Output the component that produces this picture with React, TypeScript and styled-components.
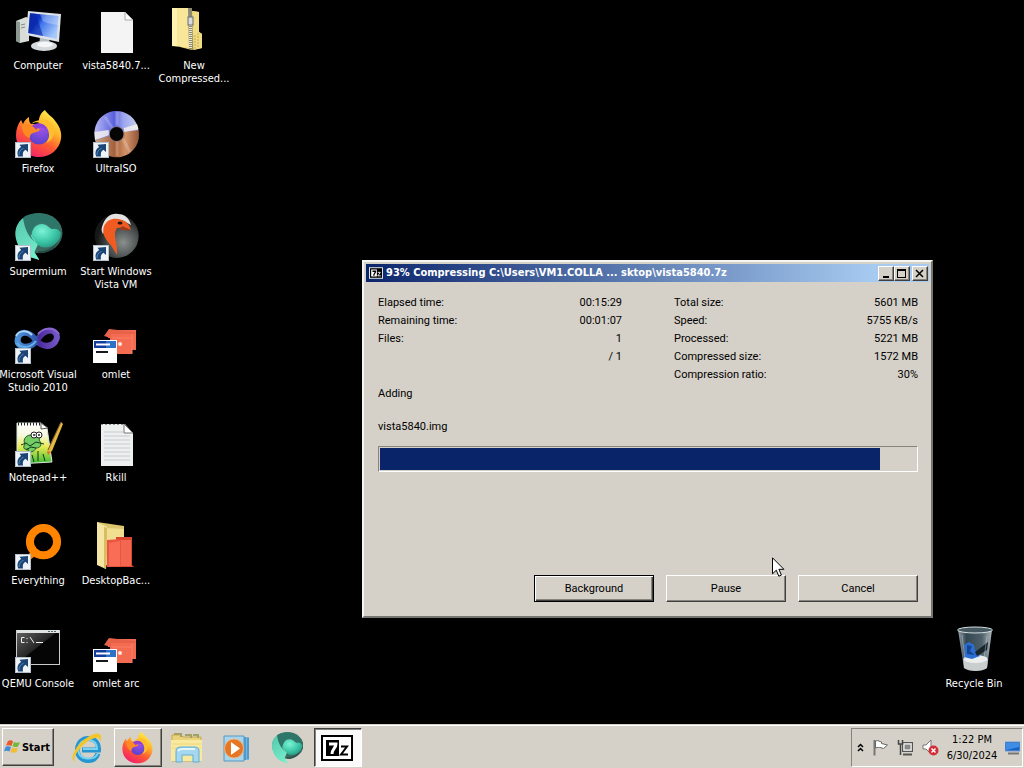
import React from 'react';
import styled, { createGlobalStyle, css } from 'styled-components';

const GlobalStyle = createGlobalStyle`
  * { box-sizing: border-box; }
  body { margin: 0; background: #000; }
  button { font: inherit; color: inherit; }
`;

const face = '#d5d1c8';
const uiFont = '"DejaVu Sans Condensed", Tahoma, "DejaVu Sans", sans-serif';
const dialogFont = 'Roboto, "Liberation Sans", Arial, sans-serif';

const raised = css`
  border: 1px solid;
  border-color: #fff #404040 #404040 #fff;
  box-shadow: inset -1px -1px 0 #87847e;
`;

const Screen = styled.div`
  min-height: 100vh;
  display: flex;
  flex-direction: column;
  background: #000;
  font: 11px/13px ${uiFont};
`;

const Desktop = styled.main`
  flex: 1;
  position: relative;
  display: flex;
  justify-content: space-between;
  padding-right: 12px;
`;

const IconGrid = styled.div`
  display: grid;
  grid-auto-flow: column;
  grid-template-rows: repeat(7, 103px);
  grid-auto-columns: 76px;
  column-gap: 2px;
`;

const BinColumn = styled.div`
  display: grid;
  grid-template-rows: repeat(7, 103px);
  grid-auto-columns: 76px;
  & > * { grid-row: 7; }
`;

const Shortcut = styled.button`
  display: flex;
  flex-direction: column;
  align-items: center;
  justify-content: flex-start;
  gap: 4px;
  padding: 7px 0 0;
  border: 0;
  background: none;
  color: #fff;
`;

const Picture = styled.span`
  position: relative;
  display: block;
  width: 48px;
  height: 48px;
  & > svg { display: block; overflow: visible; }
`;

const Badge = styled.svg`
  position: absolute;
  left: 1px;
  bottom: 0;
`;

const Label = styled.span`
  display: flex;
  flex-direction: column;
  align-items: center;
  white-space: nowrap;
`;

const Dialog = styled.section`
  position: absolute;
  left: 362px;
  top: 260px;
  width: 571px;
  min-height: 358px;
  display: flex;
  flex-direction: column;
  padding: 2px;
  border: 2px solid;
  border-color: #f6f5f2 #77756f #77756f #f6f5f2;
  background: ${face};
  font: 11px/18px ${dialogFont};
  color: #000;
`;

const TitleBar = styled.header`
  display: flex;
  align-items: center;
  height: 18px;
  padding: 0 1px 0 3px;
  gap: 3px;
  background: linear-gradient(90deg, #0b256b, #a6caf0 90%);
  color: #fff;
`;

const Title = styled.h1`
  flex: 1;
  margin: 0;
  font: bold 11px/18px ${uiFont};
  white-space: nowrap;
`;

const CaptionButtons = styled.div`
  display: flex;
  & > :last-child { margin-left: 2px; }
`;

const CaptionButton = styled.button`
  ${raised}
  display: grid;
  place-items: center;
  width: 16px;
  height: 15px;
  padding: 0;
  background: ${face};
`;

const DialogBody = styled.div`
  flex: 1;
  display: flex;
  flex-direction: column;
  padding: 12px 11px 12px 12px;
`;

const Stats = styled.div`
  display: grid;
  grid-template-columns: 1fr 1fr;
  column-gap: 52px;
`;

const StatList = styled.dl`
  margin: 0;
`;

const Stat = styled.div`
  display: flex;
  justify-content: space-between;
  min-height: 18px;
  & > dd { margin: 0; }
`;

const StatusLine = styled.p`
  margin: 0 0 13px;
  line-height: 20px;
`;

const FileName = styled.p`
  margin: 0 0 9px;
  line-height: 20px;
`;

const Track = styled.div`
  height: 26px;
  padding: 1px;
  border: 1px solid;
  border-color: #87847e #fff #fff #87847e;
`;

const Fill = styled.div`
  height: 100%;
  background: #0a246a;
`;

const Actions = styled.div`
  display: flex;
  justify-content: flex-end;
  gap: 12px;
  margin-top: auto;
`;

const ActionButton = styled.button<{ $primary?: boolean }>`
  ${raised}
  width: 120px;
  height: 27px;
  padding: 0;
  background: ${face};
  ${p => p.$primary && css`
    border-color: #000;
    box-shadow: inset 1px 1px 0 #fff, inset -1px -1px 0 #404040, inset -2px -2px 0 #87847e;
  `}
`;

const Pointer = styled.svg`
  position: absolute;
  left: 772px;
  top: 557px;
`;

const Taskbar = styled.footer`
  display: flex;
  align-items: stretch;
  height: 44px;
  padding: 2px 1px 1px 2px;
  border-top: 1px solid ${face};
  box-shadow: inset 0 1px 0 #fff;
  background: ${face};
  color: #000;
`;

const StartButton = styled.button`
  ${raised}
  display: flex;
  align-items: center;
  justify-content: center;
  width: 52px;
  margin: 1px 10px 1px 0;
  padding: 0 2px 0 0;
  background: ${face};
  font-weight: bold;
`;

const TaskList = styled.nav`
  flex: 1;
  display: flex;
  gap: 2px;
  padding-top: 1px;
`;

const TaskButton = styled.button<{ $state?: 'open' | 'active' }>`
  display: grid;
  place-items: center;
  width: 48px;
  padding: 0 2px 0 0;
  border: 1px solid transparent;
  background: none;
  ${p => p.$state === 'open' && raised}
  ${p => p.$state === 'active' && css`
    border-color: #404040 #fff #fff #404040;
    box-shadow: inset 1px 1px 0 #87847e;
    background: #fbfafa;
  `}
`;

const Tray = styled.aside`
  display: flex;
  align-items: center;
  gap: 8px;
  margin-top: 1px;
  padding: 0 2px 0 5px;
  border: 1px solid;
  border-color: #87847e #fff #fff #87847e;
`;

const Clock = styled.time`
  display: flex;
  flex-direction: column;
  align-items: center;
  width: 50px;
  line-height: 16px;
  white-space: nowrap;
`;

const TrayButton = styled.button`
  display: grid;
  place-items: center;
  padding: 0;
  border: 0;
  background: none;
`;

type ArtProps = { size?: number };

const Art = ({ size = 48, children }: ArtProps & { children: React.ReactNode }) => (
  <svg width={size} height={size} viewBox="0 0 48 48" aria-hidden="true">{children}</svg>
);

const ShortcutBadge = () => (
  <Badge width="16" height="16" viewBox="0 0 16 16" aria-hidden="true">
    <rect x=".5" y=".5" width="15" height="15" fill="#eef3f7" stroke="#b5c0ca" />
    <path d="M3.200 14.500c-1.500-4-.5-7.500 3-9.500L4.500 2.800 13 2v8l-2.500-2.200C7.800 9.500 7.500 11.500 8 14.500z" fill="#1c4474" />
    <path d="M4 13c-.2-3 1.500-5.600 4.500-6.700" stroke="#4d86bb" fill="none" />
  </Badge>
);

const ComputerArt = () => (
  <Art>
    <defs>
      <linearGradient id="screen" x1="0" y1="0" x2="1" y2=".6">
        <stop offset="0" stopColor="#0a2fb4" /><stop offset=".35" stopColor="#0b35c4" /><stop offset=".5" stopColor="#3f74ec" /><stop offset="1" stopColor="#a5c9fb" />
      </linearGradient>
    </defs>
    <path d="M2 14 12 10l3 1v23l-9 2-4-2z" fill="#d9ddd7" />
    <path d="M2 14l4 1v21l-4-2z" fill="#8d9791" />
    <path d="M7 18l4-1M7 21l4-1" stroke="#7d8785" />
    <path d="M26 30h9l1 9H25z" fill="#b5bbc0" />
    <ellipse cx="30" cy="39" rx="13" ry="5" fill="#d5dadd" />
    <ellipse cx="31" cy="37.500" rx="8" ry="2.800" fill="#f5f6f7" />
    <path d="M14 4 47 7l-2 28-33-7z" fill="#dde2e8" />
    <path d="M16 6.200 44.500 9l-1.800 22.800L14.300 26z" fill="url(#screen)" />
    <path d="M16 6.200 22 6.800 29 29 14.300 26z" fill="#0b24a0" opacity=".6" />
    <path d="M26 7.200 44.500 9l-.6 9c-6-1-12-2-15-4z" fill="#fff" opacity=".28" />
  </Art>
);

const FileArt = () => (
  <Art>
    <path d="M9 5h24l8 8v33H9z" fill="#f4f4f4" />
    <path d="M33 5v8h8z" fill="#fff" stroke="#aaa" />
  </Art>
);

const ZipArt = () => (
  <Art>
    <path d="M10 2 29 5v20l3 2v14l-10 2-12-3z" fill="#e8cf6c" />
    <path d="M2 1h16l3 2v38L2 39z" fill="#f8e798" />
    <path d="M2 1h5v38H2z" fill="#fff3b3" />
    <path d="M22 4l7 1v20l3 2v14l-8 2z" fill="#f0dd83" />
    <path d="M18 1h4l1 42-4-1z" fill="#8d8973" />
    <path d="M20.500 12v30" stroke="#ece8d4" strokeWidth="3" strokeDasharray="1 1" />
    <rect x="18" y="10" width="5" height="8" fill="#d8dadf" stroke="#666b73" />
    <path d="M28 26v15M25 28v14" stroke="#c4a94d" strokeDasharray="2 1" />
  </Art>
);

const FirefoxArt = ({ size }: ArtProps) => (
  <Art size={size}>
    <defs>
      <linearGradient id="fox" x1=".8" y1="0" x2=".25" y2="1">
        <stop offset="0" stopColor="#fff44f" /><stop offset=".35" stopColor="#ffb52b" /><stop offset=".62" stopColor="#ff5b32" /><stop offset="1" stopColor="#f01a70" />
      </linearGradient>
      <radialGradient id="globe" cx=".6" cy=".2" r=".9">
        <stop offset="0" stopColor="#a552e8" /><stop offset="1" stopColor="#5040c9" />
      </radialGradient>
    </defs>
    <path d="M31 0c2 4 8 7 11 12 4 5 6 11 5 17-2 11-11 18-22 18C12 47 2 38 2 25c0-6 2-11 5-15 1 1 1 3 2 4 1-3 3-5 6-7 0 3 0 5 2 7 3 0 6 0 8 1-1-6 1-12 6-15z" fill="url(#fox)" />
    <circle cx="25" cy="24" r="10.500" fill="url(#globe)" />
    <path d="M8 16c4-3 9-2 12 1 3 0 5 1 6 3-2 2-5 2-7 3-3 1-3 3-3 5-5-1-8-6-8-12z" fill="#ff8a24" />
    <path d="M17 14c6-4 15-1 17 6 2 5 1 10-2 13 6-2 9-8 8-14-1-6-7-11-12-9-4 0-8 1-11 4z" fill="#ffbe2e" />
    <path d="M18 16c5-5 13-3 14 3-3-2-8-2-10 1-1-2-2-3-4-4z" fill="#8f40d6" />
  </Art>
);

const DiscArt = () => (
  <Art>
    <defs>
      <linearGradient id="discTop" x1="0" y1="0" x2="1" y2="0">
        <stop offset="0" stopColor="#b7b9f5" /><stop offset=".45" stopColor="#5960dc" /><stop offset=".65" stopColor="#9ba4f0" /><stop offset="1" stopColor="#c9d0ee" />
      </linearGradient>
      <linearGradient id="discBottom" x1="0" y1="0" x2="1" y2="0">
        <stop offset="0" stopColor="#c5a48b" /><stop offset=".45" stopColor="#a55f38" /><stop offset=".7" stopColor="#d39369" /><stop offset="1" stopColor="#905438" />
      </linearGradient>
    </defs>
    <path d="M2.500 25a22 22 0 0 1 44-4L32 23l-14 4-15 3z" fill="url(#discTop)" />
    <path d="M3 30l14-4 15-4 14.500-2A22 22 0 0 1 3 30z" fill="url(#discBottom)" />
    <path d="M2.500 22l14-2 1 5-14.500 5zM32 18l13-4 1.500 5L32 22z" fill="#f2f0ef" opacity=".85" />
    <path d="M13 7l8 12M25 2v13M25 31v15M31 29l7 13" stroke="#fff" strokeWidth="3" opacity=".2" />
    <circle cx="24.600" cy="24" r="8" fill="#85757a" opacity=".6" />
    <circle cx="24.600" cy="24" r="6.900" fill="#050505" />
  </Art>
);

const SupermiumArt = ({ size }: ArtProps) => (
  <Art size={size}>
    <defs>
      <linearGradient id="leaf" x1=".2" y1="0" x2=".6" y2="1">
        <stop offset="0" stopColor="#58c9ad" /><stop offset="1" stopColor="#74edcb" />
      </linearGradient>
      <radialGradient id="bulb" cx=".35" cy=".3" r=".9">
        <stop offset="0" stopColor="#7df2d6" /><stop offset=".5" stopColor="#3ec8a8" /><stop offset="1" stopColor="#1a8471" />
      </radialGradient>
      <linearGradient id="rim" x1="0" y1="0" x2="1" y2="1">
        <stop offset="0" stopColor="#3d8a7b" /><stop offset="1" stopColor="#3b5b55" />
      </linearGradient>
    </defs>
    <ellipse cx="25" cy="20" rx="23.500" ry="20" fill="url(#rim)" />
    <path d="M9 5C3 10 1 16 1.500 23c1 9 7 18 14 21l10 3-5-8 4-9c-6-5-10-12-15-25z" fill="url(#leaf)" />
    <path d="M18 23c-1-7 4-12 10-12 5 0 7 4 10 5 4-1 7 0 9 4-1 11-10 16-20 14-4-2-6-6-9-11z" fill="url(#bulb)" />
    <path d="M9 5c5-5 22-7 31 1 4 3 7 8 7 13-2-4-5-5-9-3-5-9-16-9-20 2-3 4 0 8 4 12-7-6-11-12-13-25z" fill="#2e7669" />
    <path d="M24 38c8 1 15-3 20-10-3 8-11 13-20 12z" fill="#234c46" />
  </Art>
);

const QemuArt = () => (
  <Art>
    <defs>
      <radialGradient id="orb" cx=".65" cy=".65" r=".6">
        <stop offset="0" stopColor="#8b908f" /><stop offset=".55" stopColor="#4c5151" /><stop offset="1" stopColor="#161717" />
      </radialGradient>
    </defs>
    <circle cx="24.700" cy="23" r="22" fill="url(#orb)" />
    <path d="M10 14C13 4 19 0 26 1c7 0 11 4 13 11l-9-5-10 1-9 13c-1-2-2-4-1-7z" fill="#e4e2e0" />
    <path d="M12 13C15 6 23 4 30 7c5 2 7 4 9 10-5-3-10-3-14-2-3 4-2 9-1 14 1 4 1 8 1 13-3-5-5-9-9-13-4-5-6-10-4-16z" fill="#f15b22" />
    <path d="M30 13l9 4c-4 1-8 0-11 0z" fill="#a03a18" />
    <ellipse cx="28" cy="10" rx="2.500" ry="1.500" fill="#241512" />
  </Art>
);

const VisualStudioArt = () => (
  <Art>
    <defs>
      <linearGradient id="vs">
        <stop offset="0" stopColor="#4d93da" /><stop offset=".48" stopColor="#3056ac" /><stop offset=".55" stopColor="#4c2b9c" /><stop offset="1" stopColor="#7256c6" />
      </linearGradient>
    </defs>
    <path d="M4 22c2-7 11-7 17 1s15 9 20 3c5-7-1-13-8-11-8 2-9 12-17 15C8 32 2 29 4 22z" fill="none" stroke="url(#vs)" strokeWidth="6" />
    <path d="M2 20c3-6 11-6 16-1" stroke="#add7f5" strokeWidth="2" fill="none" />
    <path d="M24 18c6-7 16-7 21 0" stroke="#8a66cf" strokeWidth="2" fill="none" />
    <path d="M3 27c4 6 14 5 19-2" stroke="#65b1e8" strokeWidth="2" fill="none" />
  </Art>
);

const OmletArt = () => (
  <Art>
    <path d="M16 14h28v20h-4v4H18V22h-2z" fill="#f36b51" />
    <path d="M30 17h10v21M20 22h20" stroke="#f98068" fill="none" />
    <path d="M12 20l5-7 26 3v2H19v4z" fill="#e8624a" />
    <circle cx="28" cy="28" r="2" fill="#fde6db" />
    <rect x="1" y="24" width="24" height="23" fill="#fff" />
    <path d="M2 25h22v7H2z" fill="#123d9b" /><path d="M14 25h10v7H14z" fill="#2e72c8" />
    <path d="M4 28.500h14" stroke="#fff" strokeWidth="2" />
    <path d="M4 36h12" stroke="#17191e" strokeWidth="2" />
  </Art>
);

const NotepadPlusArt = () => (
  <Art>
    <defs>
      <linearGradient id="note" x1="0" y1="0" x2="0" y2="1">
        <stop offset="0" stopColor="#fff" /><stop offset=".3" stopColor="#f7f8df" /><stop offset=".58" stopColor="#e7eb53" /><stop offset="1" stopColor="#36bb35" />
      </linearGradient>
    </defs>
    <path d="M3 4h24l6 5 5 34-35 2z" fill="url(#note)" stroke="#dce5db" />
    <path d="M4 5h23" stroke="#222" strokeWidth="3" strokeDasharray="1 2" />
    <path d="M27 4v6l7-1z" fill="#fff" stroke="#555" />
    <path d="M11 25c-3-5 2-10 8-9 4-4 9 0 6 5 4 5 1 8-3 8-2 5-9 5-8 1-5 1-5-2-3-5z" fill="#73cd64" stroke="#245a31" />
    <circle cx="20" cy="16" r="3" fill="#fff" stroke="#222" /><circle cx="25" cy="16" r="3" fill="#fff" stroke="#222" />
    <path d="M7 26l5-2 4 3 6-4 8 2M12 31l5-3 5 1M18 36l2 7M24 32v10M29 35l2 7" stroke="#14351b" fill="none" />
    <path d="M47 3 33 32l1 3 4-3L49 5z" fill="#e5b93d" /><path d="M47 3 34 31" stroke="#7b572d" /><path d="M33 32l1 4 3-3z" fill="#de741c" />
    <circle cx="20" cy="16" r="1" fill="#222" /><circle cx="25" cy="16" r="1" fill="#222" />
  </Art>
);

const TextFileArt = () => (
  <Art>
    <path d="M9 5h24l8 9v33H9z" fill="#eeefef" />
    <path d="M12 13h19M12 17h26M12 21h26M12 25h26M12 29h26M12 33h26M12 37h26M12 41h26" stroke="#c6ccd0" />
    <path d="M9 5.500h24" stroke="#8c9196" strokeDasharray="2 2" />
    <path d="M32 5v9h9z" fill="#fff" stroke="#777" />
  </Art>
);

const EverythingArt = () => (
  <Art>
    <circle cx="29.500" cy="19.700" r="13.600" fill="none" stroke="#ff8500" strokeWidth="8" />
    <path d="M18 29l4 4-7 6-4-4z" fill="#ff8500" />
  </Art>
);

const FolderArt = () => (
  <Art>
    <path d="M5 0 32 4v14L13 44z" fill="#dcc56d" />
    <path d="M14 6l18 1v36H14z" fill="#f1de91" />
    <path d="M24 15h16v28l2 2H24z" fill="#d94731" />
    <path d="M27 18h12v26H27z" fill="#f36650" />
    <path d="M15 18l14-1v28H15z" fill="#e95541" />
    <path d="M17 21l11-2v25H17z" fill="#f96c55" />
    <path d="M5 0l10 5v25l-1 17L5 43z" fill="#f5e6a3" /><path d="M12 5l3 1v24l-1 17-2-1z" fill="#d8bd64" />
  </Art>
);

const ConsoleArt = () => (
  <Art>
    <defs>
      <linearGradient id="glass" x1="0" y1="0" x2="1" y2="1">
        <stop offset="0" stopColor="#666" /><stop offset=".48" stopColor="#252525" /><stop offset=".5" stopColor="#050505" />
      </linearGradient>
    </defs>
    <rect x="2.500" y="5.500" width="43" height="34" fill="url(#glass)" stroke="#c8cccd" />
    <path d="M3 6.500h42" stroke="#e0e3e4" strokeWidth="3" />
    <path d="M34 6.500h9" stroke="#566" strokeDasharray="2 1" />
    <path d="M10.500 12.500h-3v5h3M13 13v1M13 17v1M16 12l4 6M22 17.500h7" stroke="#f0f0f0" fill="none" />
  </Art>
);

const BinArt = () => (
  <Art>
    <defs>
      <linearGradient id="bin"><stop offset="0" stopColor="#919da5" /><stop offset=".25" stopColor="#344852" /><stop offset=".7" stopColor="#4f606a" /><stop offset="1" stopColor="#aeb7bd" /></linearGradient>
    </defs>
    <path d="M8 5h34l-5 38c-5 4-18 4-23 0z" fill="url(#bin)" />
    <path d="M13 34c7 4 17 4 25 0l-1 9c-5 4-18 4-23 0z" fill="#c9cdce" />
    <ellipse cx="25.500" cy="34" rx="12" ry="4" fill="#eceeee" />
    <path d="M14 20l5-3 5 3 1 5 5 6-8 3-8-2 1-6z" fill="#2b6fd3" /><path d="M17 20l5 1-2 5 5 4-8-1z" fill="#174591" />
    <path d="M25 27l13-10-1 8-10 6z" fill="#17242b" />
    <ellipse cx="25" cy="5" rx="17.500" ry="3" fill="#465961" stroke="#d7dfe2" />
    <path d="M12 10l4 31M37 11l-4 30" stroke="#d4dce0" opacity=".4" />
  </Art>
);

const SevenZip = ({ width, height, invert }: { width: number; height: number; invert?: boolean }) => (
  <svg width={width} height={height} viewBox="0 0 32 26" aria-hidden="true">
    <rect x="1" y="1" width="30" height="24" fill={invert ? '#000' : '#fff'} stroke={invert ? '#fff' : '#000'} strokeWidth="2" />
    <rect x="5" y="5" width="13" height="16" fill={invert ? '#fff' : '#000'} />
    <path d="M8 9h7c0 4-4 5-4 10" fill="none" stroke={invert ? '#000' : '#fff'} strokeWidth="3" />
    <path d="M20 11.500h6l-6 8h7" fill="none" stroke={invert ? '#fff' : '#000'} strokeWidth="2" />
  </svg>
);

const WindowsFlag = () => (
  <svg width="18" height="16" viewBox="0 0 18 16" aria-hidden="true">
    <path d="M4 2c2-1 4-1 5 .5L7.500 7C6 6 4 6 2 6.500z" fill="#e85a2b" />
    <path d="M10 3c2 1 4 1 6 0l-2 4.500c-2 .8-4 .7-5.500-.2z" fill="#72b83e" />
    <path d="M1.700 7.700C4 7 5.500 7.200 7 8l-1.500 4.600C4 11.500 2 11.500 0 12.200z" fill="#438cdb" />
    <path d="M8 8.500c2 1 4 1.200 6 .3L12.500 13c-2 1-4.200.8-6 0z" fill="#f2bd32" />
  </svg>
);

const IeArt = () => (
  <svg width="32" height="32" viewBox="0 0 32 32" aria-hidden="true">
    <path d="M27 21.500C25 27 20.500 29 16 28.500 9.500 28 6 23 6.500 17 7 10.500 11.500 6 18 6.500c6.500.5 10 5 9.500 11.500H11" fill="none" stroke="#2596cf" strokeWidth="5" />
    <path d="M27 21C25 26 20.500 27 16 26.500 9.500 26 7 22 7.500 17 8 10.500 12 8 18 8c5 .5 8 4 8 9H12" fill="none" stroke="#7bd3f2" strokeWidth="2" />
    <path d="M4 30C-3 27 6 11 17 5 23 1 29 0 30 4c.5 2 0 4-1 6 0-3-1-5-5-4C14 8 0 25 4 30z" fill="#f2c52d" />
  </svg>
);

const ExplorerArt = () => (
  <svg width="34" height="34" viewBox="0 0 34 34" aria-hidden="true">
    <path d="M2 4h9l2 2h18v24H2z" fill="#ead27a" stroke="#c9aa4e" />
    <path d="M4 3h7v3M15 4h6v3M23 4h5v3" fill="none" stroke="#a3a068" strokeWidth="2" />
    <path d="M1 9h31v21H1z" fill="#f8e9a0" /><path d="M2 13h29M2 17h29" stroke="#f0d878" />
    <path d="M6 31V20c0-3 2-4 5-4h13c3 0 5 1 5 4v11h-6v-7H12v7z" fill="#a5d7ef" stroke="#5daed8" />
    <path d="M8 20c1-2 3-2 5-2h12" stroke="#e4f6fb" strokeWidth="2" fill="none" />
  </svg>
);

const PlayerArt = () => (
  <svg width="32" height="32" viewBox="0 0 32 32" aria-hidden="true">
    <path d="M9 5h19v23H9z" fill="#75b7df" /><path d="M24 5v23M27 6v21" stroke="#327fba" />
    <path d="M3 4h20v25H3z" fill="#a9d5eb" stroke="#5597c5" />
    <circle cx="13" cy="16.500" r="9.500" fill="#e67623" stroke="#f3b37d" />
    <path d="M10 10l9 6.500-9 6.500z" fill="#fff" />
  </svg>
);

type Item = { lines: string[]; art: React.ReactNode; link?: boolean };

const items: Item[] = [
  { lines: ['Computer'], art: <ComputerArt /> },
  { lines: ['Firefox'], art: <FirefoxArt />, link: true },
  { lines: ['Supermium'], art: <SupermiumArt />, link: true },
  { lines: ['Microsoft Visual', 'Studio 2010'], art: <VisualStudioArt />, link: true },
  { lines: ['Notepad++'], art: <NotepadPlusArt />, link: true },
  { lines: ['Everything'], art: <EverythingArt />, link: true },
  { lines: ['QEMU Console'], art: <ConsoleArt />, link: true },
  { lines: ['vista5840.7...'], art: <FileArt /> },
  { lines: ['UltraISO'], art: <DiscArt />, link: true },
  { lines: ['Start Windows', 'Vista VM'], art: <QemuArt />, link: true },
  { lines: ['omlet'], art: <OmletArt /> },
  { lines: ['Rkill'], art: <TextFileArt /> },
  { lines: ['DesktopBac...'], art: <FolderArt /> },
  { lines: ['omlet arc'], art: <OmletArt /> },
  { lines: ['New', 'Compressed...'], art: <ZipArt /> },
];

const DesktopItem = ({ lines, art, link }: Item) => (
  <Shortcut type="button">
    <Picture>{art}{link && <ShortcutBadge />}</Picture>
    <Label>{lines.map(line => <span key={line}>{line}</span>)}</Label>
  </Shortcut>
);

const totalMb = 5601;
const processedMb = 5221;

const timeStats = [['Elapsed time:', '00:15:29'], ['Remaining time:', '00:01:07'], ['Files:', '1'], ['', '/ 1']];
const sizeStats = [['Total size:', `${totalMb} MB`], ['Speed:', '5755 KB/s'], ['Processed:', `${processedMb} MB`], ['Compressed size:', '1572 MB'], ['Compression ratio:', '30%']];

const StatGroup = ({ rows }: { rows: string[][] }) => (
  <StatList>
    {rows.map(([name, value]) => <Stat key={name}><dt>{name}</dt><dd>{value}</dd></Stat>)}
  </StatList>
);

export default function App() {
  const percent = (processedMb / totalMb) * 100;
  return (
    <Screen>
      <GlobalStyle />
      <Desktop>
        <IconGrid>{items.map(item => <DesktopItem key={item.lines[0]} {...item} />)}</IconGrid>
        <BinColumn><DesktopItem lines={['Recycle Bin']} art={<BinArt />} /></BinColumn>

        <Dialog aria-labelledby="dialog-title">
          <TitleBar>
            <SevenZip width={14} height={12} invert />
            <Title id="dialog-title">93% Compressing C:\Users\VM1.COLLA ... sktop\vista5840.7z</Title>
            <CaptionButtons>
              <CaptionButton type="button" aria-label="Minimize">
                <svg width="10" height="9" viewBox="0 0 10 9"><path d="M2 7h6v2H2z" /></svg>
              </CaptionButton>
              <CaptionButton type="button" aria-label="Maximize">
                <svg width="10" height="9" viewBox="0 0 10 9"><path d="M0 0h9v9H0zM1 2v6h7V2z" fillRule="evenodd" /></svg>
              </CaptionButton>
              <CaptionButton type="button" aria-label="Close">
                <svg width="10" height="9" viewBox="0 0 10 9"><path d="M1 1l7 7M8 1l-7 7" stroke="#000" strokeWidth="1.500" /></svg>
              </CaptionButton>
            </CaptionButtons>
          </TitleBar>
          <DialogBody>
            <Stats>
              <StatGroup rows={timeStats} />
              <StatGroup rows={sizeStats} />
            </Stats>
            <StatusLine>Adding</StatusLine>
            <FileName>vista5840.img</FileName>
            <Track role="progressbar" aria-label="Compression progress" aria-valuenow={Math.round(percent)} aria-valuemin={0} aria-valuemax={100}>
              <Fill style={{ width: `${percent}%` }} />
            </Track>
            <Actions>
              <ActionButton type="button" $primary>Background</ActionButton>
              <ActionButton type="button">Pause</ActionButton>
              <ActionButton type="button">Cancel</ActionButton>
            </Actions>
          </DialogBody>
        </Dialog>
        <Pointer width="13" height="21" viewBox="0 0 13 21" aria-hidden="true">
          <path d="M.5.800v16l3.800-3.600 2.500 6 2.600-1.100-2.500-5.800h5z" fill="#fff" stroke="#000" />
        </Pointer>
      </Desktop>

      <Taskbar>
        <StartButton type="button"><WindowsFlag />Start</StartButton>
        <TaskList aria-label="Tasks">
          <TaskButton type="button" aria-label="Internet Explorer"><IeArt /></TaskButton>
          <TaskButton type="button" aria-label="Firefox" $state="open"><FirefoxArt size={32} /></TaskButton>
          <TaskButton type="button" aria-label="Explorer"><ExplorerArt /></TaskButton>
          <TaskButton type="button" aria-label="Media Player"><PlayerArt /></TaskButton>
          <TaskButton type="button" aria-label="Supermium"><SupermiumArt size={32} /></TaskButton>
          <TaskButton type="button" aria-label="7-Zip" $state="active"><SevenZip width={32} height={26} /></TaskButton>
        </TaskList>
        <Tray>
          <TrayButton type="button" aria-label="Show hidden icons">
            <svg width="7" height="9" viewBox="0 0 7 9"><path d="M1 4l2.500-2.500L6 4M1 8l2.500-2.500L6 8" fill="none" stroke="#000" strokeWidth="1.500" /></svg>
          </TrayButton>
          <TrayButton type="button" aria-label="Action Center">
            <svg width="17" height="17" viewBox="0 0 17 17"><path d="M2.500 1v15.500" stroke="#777" strokeWidth="2" /><path d="M3.500 2c3-1 4 .5 6 1v1.500l6 1.500-4 3.500-2.500-.8C7 8.500 6 8 3.500 9z" fill="#fff" stroke="#666" /></svg>
          </TrayButton>
          <TrayButton type="button" aria-label="Network">
            <svg width="17" height="17" viewBox="0 0 17 17"><rect x="5.500" y="3.500" width="10" height="9" fill="#aaa" stroke="#555" /><rect x="7" y="5" width="7" height="6" fill="#888" stroke="#fff" /><path d="M6 15.500h9" stroke="#555" strokeWidth="2" /><path d="M1.500 1v4h4V1M3.500 5v11" stroke="#444" strokeWidth="1.500" fill="none" /></svg>
          </TrayButton>
          <TrayButton type="button" aria-label="Volume muted">
            <svg width="17" height="17" viewBox="0 0 17 17"><path d="M1 6h3l5-5v14l-5-5H1z" fill="#fff" stroke="#777" /><circle cx="11.500" cy="11.500" r="5" fill="#d32d35" /><path d="M9.500 9.500l4 4M13.500 9.500l-4 4" stroke="#fff" strokeWidth="1.500" /></svg>
          </TrayButton>
          <Clock dateTime="2024-06-30T13:22"><span>1:22 PM</span><span>6/30/2024</span></Clock>
          <TrayButton type="button" aria-label="Show desktop">
            <svg width="15" height="14" viewBox="0 0 15 14"><path d="M0 1h15v9H0z" fill="#1763c4" stroke="#6f9bd2" /><path d="M1 2h13v4L1 9z" fill="#3e8de5" /><path d="M3 12.500h11" stroke="#777" strokeWidth="2" /></svg>
          </TrayButton>
        </Tray>
      </Taskbar>
    </Screen>
  );
}
